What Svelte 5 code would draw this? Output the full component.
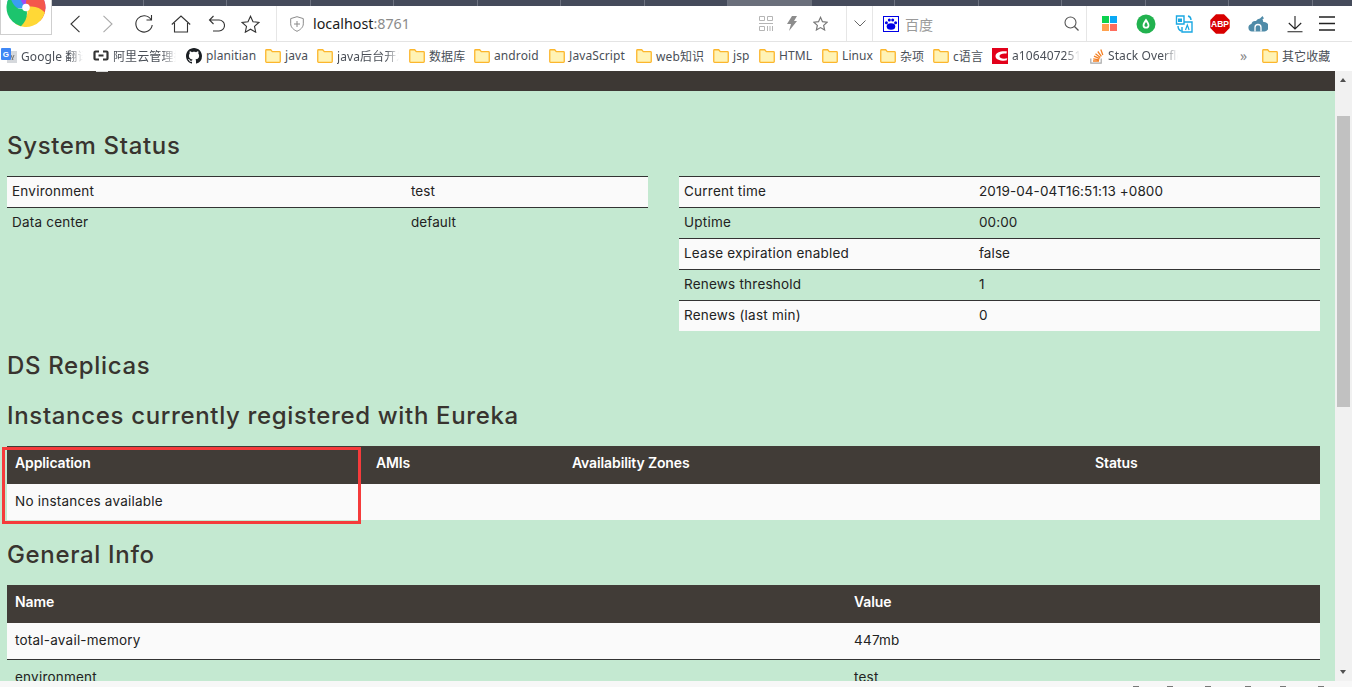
<script>
  const tabs = Array.from({ length: 15 }, (_, i) => i);
  const marks = [1133, 1167, 1205, 1245, 1280, 1318];
  const petals = [
    { color: '#3a9df2', rot: 285 },
    { color: '#a24cf0', rot: 345 },
    { color: '#f4574c', rot: 25 },
    { color: '#ffd836', rot: 105 },
    { color: '#1cc46d', rot: 195 }
  ];
  const bookmarks = [
    { kind: 'google', text: 'Google 翻译', w: 92, fade: true },
    { kind: 'ali', text: '阿里云管理控制台', w: 93, fade: true },
    { kind: 'github', text: 'planitian', w: 79 },
    { kind: 'folder', text: 'java', w: 52 },
    { kind: 'folder', text: 'java后台开发', w: 92, fade: true },
    { kind: 'folder', text: '数据库', w: 65 },
    { kind: 'folder', text: 'android', w: 75 },
    { kind: 'folder', text: 'JavaScript', w: 87 },
    { kind: 'folder', text: 'web知识', w: 77 },
    { kind: 'folder', text: 'jsp', w: 46 },
    { kind: 'folder', text: 'HTML', w: 63 },
    { kind: 'folder', text: 'Linux', w: 58 },
    { kind: 'folder', text: '杂项', w: 53 },
    { kind: 'folder', text: 'c语言', w: 59 },
    { kind: 'csdn', text: 'a1064072510', w: 98, fade: true },
    { kind: 'so', text: 'Stack Overflow', w: 98, fade: true }
  ];
  const leftRows = [['Environment', 'test'], ['Data center', 'default']];
  const rightRows = [
    ['Current time', '2019-04-04T16:51:13 +0800'],
    ['Uptime', '00:00'],
    ['Lease expiration enabled', 'false'],
    ['Renews threshold', '1'],
    ['Renews (last min)', '0']
  ];
</script>

{#snippet folder()}
  <svg class="ico" width="16" height="14" viewBox="0 0 16 14">
    <path d="M.75 12.6V1.5q0-.75.75-.75h4.2l1.6 1.9h7.2q.75 0 .75.75v9.2q0 .75-.75.75H1.5q-.75 0-.75-.75z" fill="#fff3b5" stroke="#fcb62c" stroke-width="1.3"/>
  </svg>
{/snippet}

<div class="window">
  <div class="tabs">
    {#each tabs as t}
      <div class="tab" class:active={t === 8}></div>
    {/each}
  </div>

  <div class="logo">
    <svg width="52" height="30" viewBox="0 0 52 30">
      <g transform="translate(26 7.500)">
        {#each petals as p}
          <path transform="rotate({p.rot})" d="M0 0C-4-6-4-13 0-19.500A19.500 19.500 0 0 1 18.300 6.700C12-4 5-5 0 0z" fill={p.color}/>
        {/each}
        <circle r="3.800" fill="#fff"/>
      </g>
    </svg>
  </div>

  <div class="toolbar">
    <div></div>
    <div class="cell"><svg width="12" height="18" viewBox="0 0 12 18"><path d="M10.500.8 2 9l8.500 8.200" fill="none" stroke="#333" stroke-width="1.100"/></svg></div>
    <div class="cell"><svg width="12" height="18" viewBox="0 0 12 18"><path d="M1.500.8 10 9l-8.500 8.200" fill="none" stroke="#aaa" stroke-width="1.100"/></svg></div>
    <div class="cell"><svg width="20" height="20" viewBox="0 0 20 20"><path d="M17 5.500A8.200 8.200 0 1 0 18.200 11M17.500 1v5h-5" fill="none" stroke="#333" stroke-width="1.100"/></svg></div>
    <div class="cell"><svg width="20" height="18" viewBox="0 0 20 18"><path d="M.8 9.500 10 1l9.200 8.500M3.500 8v9h13V8" fill="none" stroke="#333" stroke-width="1.100"/></svg></div>
    <div class="cell"><svg width="17" height="17" viewBox="0 0 17 17"><path d="M5.500 1 1.500 5l4 4M1.500 5H11a5 5 0 0 1 0 11H5" fill="none" stroke="#333" stroke-width="1.100"/></svg></div>
    <div class="cell"><svg width="19" height="18" viewBox="0 0 19 18"><path d="M9.500 1.200 12 6.700l5.900.7-4.400 4 1.200 5.800-5.200-3-5.200 3 1.200-5.800-4.400-4 5.900-.7z" fill="none" stroke="#333" stroke-width="1.100"/></svg></div>
    <div></div>

    <div class="address">
      <svg width="14" height="16" viewBox="0 0 14 16"><path d="M7 .7 13.300 2.600v5.200c0 3.600-3 6-6.300 7.500C3.700 13.800.7 11.400.7 7.800V2.600zM7 5v6M4 8h6" fill="none" stroke="#8a8a8a" stroke-width="1"/></svg>
      <span class="url">localhost<span class="port">:8761</span></span>
      <span class="spacer"></span>
      <svg class="qr" width="14" height="15" viewBox="0 0 14 15"><path d="M.5.500h5v4h-5zM8.500.500h5v4h-5zM.5 10.500h5v4h-5zM0 7.500h14M8.500 10v5M11 10v5M13.500 10v5" fill="none" stroke="#b5b5b5"/></svg>
      <svg class="bolt" width="10" height="15" viewBox="0 0 10 15"><path d="M5 0h5L7 5h3L2 15l2-7H0z" fill="#8c8c8c"/></svg>
      <svg class="star2" width="15" height="15" viewBox="0 0 19 18"><path d="M9.500 1.200 12 6.700l5.900.7-4.400 4 1.200 5.800-5.200-3-5.200 3 1.200-5.800-4.400-4 5.900-.7z" fill="none" stroke="#777" stroke-width="1.500"/></svg>
    </div>

    <div class="cell sep"><svg width="12" height="7" viewBox="0 0 12 7"><path d="M.5.500 6 6l5.500-5.500" fill="none" stroke="#666"/></svg></div>

    <div class="search">
      <svg width="16" height="16" viewBox="0 0 16 16"><rect width="16" height="16" fill="#fff"/><rect x=".5" y=".5" width="15" height="15" fill="none" stroke="#0000e6"/><ellipse cx="8" cy="10.500" rx="4.300" ry="3.200" fill="#0000e6"/><circle cx="3.400" cy="6.800" r="1.500" fill="#0000e6"/><circle cx="6.300" cy="3.900" r="1.500" fill="#0000e6"/><circle cx="9.700" cy="3.900" r="1.500" fill="#0000e6"/><circle cx="12.600" cy="6.800" r="1.500" fill="#0000e6"/></svg>
      <span class="engine">百度</span>
      <span class="spacer"></span>
      <svg width="15" height="15" viewBox="0 0 15 15"><circle cx="6.500" cy="6.500" r="5.500" fill="none" stroke="#555" stroke-width="1.100"/><path d="m10.500 10.500 4 4" stroke="#555" stroke-width="1.300"/></svg>
    </div>

    <div class="exts">
      <div class="cell"><svg width="15" height="15" viewBox="0 0 15 15"><rect width="7" height="7" fill="#0bd24e"/><rect x="8" width="7" height="7" fill="#0aa9f5"/><rect y="8" width="7" height="7" fill="#ffa24f"/><rect x="8" y="8" width="7" height="7" fill="#ff6d5e"/></svg></div>
      <div class="cell"><svg width="20" height="20" viewBox="0 0 20 20"><circle cx="10" cy="10" r="9.500" fill="#22b24f"/><path d="M10 4.500c2 3 3.400 4.600 3.400 6.700a3.400 3.400 0 0 1-6.800 0c0-2.100 1.400-3.700 3.400-6.700z" fill="#fff"/><path d="M10 8c1 1.500 1.500 2.300 1.500 3.200a1.500 1.500 0 0 1-3 0c0-.9.500-1.700 1.500-3.200z" fill="#22b24f"/></svg></div>
      <div class="cell"><svg width="18" height="18" viewBox="0 0 18 18"><path d="M1.500 1h7.500v8H1.500zM9.500 7h7.500v10H7V12" fill="none" stroke="#1ba8e2" stroke-width="1.400"/><path d="M3 11c0 3 1.500 4.500 3.500 5M13 1c2 .5 3 2 3 4" fill="none" stroke="#1ba8e2" stroke-width="1.400"/><path d="M3 3.500h4v3.500H3z" fill="#1ba8e2"/><path d="m10.500 15 1.800-5 1.800 5" fill="none" stroke="#1ba8e2" stroke-width="1.200"/></svg></div>
      <div class="cell"><svg width="20" height="20" viewBox="0 0 20 20"><path d="M6 .3h8L19.700 6v8L14 19.700H6L.3 14V6z" fill="#d80000"/><text x="10" y="13" text-anchor="middle" class="abp">ABP</text></svg></div>
      <div class="cell"><svg width="20" height="16" viewBox="0 0 20 16"><path d="M4 15.500a3.800 3.800 0 0 1-.6-7.500 4 4 0 0 1 4.600-3A4.500 4.500 0 0 1 12 2.500L14.500 0l1.500 2.500-1.500.5.800 3a4.500 4.500 0 0 1 1.200 9.500z" fill="#4f8ba8"/><path d="M7 15.500v-4a3 3 0 0 1 6 0v4" fill="none" stroke="#fff" stroke-width="1.300"/></svg></div>
      <div class="cell"><svg width="16" height="18" viewBox="0 0 16 18"><path d="M8 1v13M1.800 8 8 14l6.200-6M.5 16.800h15" fill="none" stroke="#222" stroke-width="1.100"/></svg></div>
      <div class="cell"><svg width="16" height="15" viewBox="0 0 16 15"><path d="M0 1h16M0 7.500h16M0 14h16" stroke="#222" stroke-width="1.300"/></svg></div>
    </div>
  </div>

  <div class="bookmarks">
    {#each bookmarks as b}
      <div class="bm" class:fade={b.fade} style:width="{b.w}px">
        {#if b.kind === 'folder'}
          {@render folder()}
        {:else if b.kind === 'google'}
          <svg class="ico" width="16" height="15" viewBox="0 0 16 15"><rect x="6" y="3" width="10" height="12" fill="#d5d8dc"/><path d="M10 7l2 5M13 7l-2 5" stroke="#777"/><rect width="10" height="12" rx="1" fill="#3f87f5"/><text x="5" y="9" text-anchor="middle" class="g">G</text></svg>
        {:else if b.kind === 'ali'}
          <svg class="ico" width="16" height="11" viewBox="0 0 16 11"><path d="M6 1.500H2.500q-1 0-1 1v6q0 1 1 1H6M10 1.500h3.500q1 0 1 1v6q0 1-1 1H10M5.500 5.500h5" fill="none" stroke="#333" stroke-width="2.200"/></svg>
        {:else if b.kind === 'github'}
          <svg class="ico" width="16" height="16" viewBox="0 0 16 16"><path fill="#1b1f23" d="M8 0C3.580 0 0 3.580 0 8c0 3.540 2.290 6.530 5.470 7.590.4.070.55-.17.55-.38 0-.19-.01-.82-.01-1.490-2.010.37-2.530-.49-2.690-.94-.09-.23-.48-.94-.82-1.130-.28-.15-.68-.52-.01-.53.63-.01 1.080.58 1.230.82.72 1.210 1.870.87 2.330.66.070-.52.280-.87.510-1.070-1.780-.2-3.640-.89-3.640-3.950 0-.87.31-1.590.82-2.150-.08-.2-.36-1.020.08-2.120 0 0 .67-.21 2.200.82.64-.18 1.320-.27 2-.27.68 0 1.360.09 2 .27 1.530-1.040 2.200-.82 2.200-.82.44 1.100.16 1.920.08 2.120.51.56.82 1.270.82 2.150 0 3.070-1.870 3.750-3.650 3.950.29.25.54.73.54 1.480 0 1.070-.01 1.930-.01 2.200 0 .21.15.46.55.38A8.013 8.013 0 0016 8c0-4.420-3.580-8-8-8z"/></svg>
        {:else if b.kind === 'csdn'}
          <svg class="ico" width="16" height="16" viewBox="0 0 16 16"><rect width="16" height="16" fill="#e2001a"/><path d="M15 3.500C9 2.800 3.500 4.500 3.500 8.200c0 3.500 5.500 5 11 4.300l.8-2.200c-4 .8-7.800.2-7.800-2.100 0-2.200 3.700-3 6.800-2.500z" fill="#fff"/></svg>
        {:else if b.kind === 'so'}
          <svg class="ico" width="14" height="16" viewBox="0 0 14 16"><path d="M.8 10.500v4.700h10.400v-4.700" fill="none" stroke="#a8a8a8" stroke-width="1.200"/><path d="M3 13h6M3.200 10.800l6 1M4 8.200l5.600 2.500M5.500 5.700l4.800 3.700M7.800 3.500l3.600 4.800M10.800 1.500l2 5.500" fill="none" stroke="#f48024" stroke-width="1.300"/></svg>
        {/if}
        <span class="bm-text">{b.text}</span>
      </div>
    {/each}
    <span class="more">»</span>
    <div class="bm last">
      {@render folder()}
      <span class="bm-text">其它收藏</span>
    </div>
  </div>

  <div class="viewport">
    <div class="page">
      <div class="navbar"><span class="navmark"></span></div>
      <div class="content">
        <h1 class="first">System Status</h1>
        <div class="status">
          <table class="kv left-kv">
            <tbody>
              {#each leftRows as r}
                <tr><td class="k">{r[0]}</td><td>{r[1]}</td></tr>
              {/each}
            </tbody>
          </table>
          <table class="kv right-kv">
            <tbody>
              {#each rightRows as r}
                <tr><td class="k">{r[0]}</td><td>{r[1]}</td></tr>
              {/each}
            </tbody>
          </table>
        </div>

        <h1 class="replicas">DS Replicas</h1>
        <h1 class="instances">Instances currently registered with Eureka</h1>

        <div class="marked">
          <table class="data apps">
            <thead>
              <tr><th class="c1">Application</th><th class="c2">AMIs</th><th class="c3">Availability Zones</th><th>Status</th></tr>
            </thead>
            <tbody>
              <tr><td colspan="4">No instances available</td></tr>
            </tbody>
          </table>
          <div class="redbox"></div>
        </div>

        <h1 class="general">General Info</h1>
        <table class="data info">
          <thead>
            <tr><th class="name">Name</th><th>Value</th></tr>
          </thead>
          <tbody>
            <tr><td>total-avail-memory</td><td>447mb</td></tr>
            <tr><td>environment</td><td>test</td></tr>
          </tbody>
        </table>
      </div>
    </div>
    <div class="scrollbar">
      <span class="arrow up"></span>
      <span class="thumb"></span>
      <span class="arrow down"></span>
    </div>
  </div>

  <div class="status-strip">
    {#each marks as m}
      <span class="mark" style:left="{m}px"></span>
    {/each}
  </div>
</div>

<style>
  :global(body) { margin: 0; background: #fff; }
  .window {
    position: relative;
    width: 1352px;
    height: 687px;
    overflow: hidden;
    display: flex;
    flex-direction: column;
    font-family: "Noto Sans", "Noto Sans CJK SC", sans-serif;
  }
  .tabs {
    height: 6px;
    flex: none;
    display: flex;
    background: #454b5b;
    padding-left: 60px;
    box-sizing: border-box;
  }
  .tab {
    width: 83.500px;
    flex: none;
    box-sizing: border-box;
    border-right: 1px solid #6d7280;
  }
  .tab.active { background: #6a6f7b; border-right: 0; }
  .logo {
    position: absolute;
    left: 0;
    top: 0;
    width: 50px;
    height: 34px;
    background: #fff;
    border: 1px solid #cfcfcf;
    border-top: 0;
    overflow: hidden;
  }
  .logo svg { display: block; margin-left: -1px; }
  .toolbar {
    height: 35px;
    flex: none;
    display: grid;
    grid-template-columns: 57px 36px 30px 42px 32px 38px 30px 11px 570px 26px 214px 1fr;
    align-items: stretch;
    background: #fff;
    border-bottom: 1px solid #e4e4e4;
  }
  .cell { display: flex; align-items: center; justify-content: center; }
  .cell svg { display: block; }
  .address, .search {
    display: flex;
    align-items: center;
    border-left: 1px solid #e6e6e6;
    box-sizing: border-box;
  }
  .address { padding-left: 13px; }
  .url { margin-left: 9px; font-size: 14.300px; color: #1a1a1a; }
  .port { color: #8b8b8b; }
  .spacer { flex: 1; }
  .qr { margin-right: 14px; }
  .bolt { margin-right: 16px; }
  .star2 { margin-right: 18px; }
  .sep { border-left: 1px solid #e6e6e6; }
  .search { padding: 0 7px 0 10px; }
  .engine { margin-left: 6px; font-size: 14px; color: #9a9a9a; }
  .exts {
    display: grid;
    grid-template-columns: 44px 30px 46px 26px 50px 24px 40px 5px;
    border-left: 1px solid #e6e6e6;
  }
  .abp { font: bold 8.500px "Liberation Sans", sans-serif; fill: #fff; }
  .g { font: bold 8px "Liberation Sans", sans-serif; fill: #fff; }
  .bookmarks {
    height: 29px;
    flex: none;
    display: flex;
    align-items: center;
    padding: 0 0 2px 1px;
    background: #fff;
    font-size: 12px;
    color: #4a4f57;
    letter-spacing: .1px;
    box-sizing: border-box;
  }
  .bm {
    display: flex;
    align-items: center;
    gap: 4px;
    flex: none;
    overflow: hidden;
    white-space: nowrap;
    box-sizing: border-box;
    padding-right: 10px;
  }
  .bm.fade .bm-text {
    flex: 1;
    min-width: 0;
    overflow: hidden;
    -webkit-mask-image: linear-gradient(to right, #000 78%, transparent);
    mask-image: linear-gradient(to right, #000 78%, transparent);
  }
  .ico { flex: none; display: block; }
  .more { margin-left: 52px; width: 22px; flex: none; font-size: 14px; color: #888; }
  .bm.last { padding-right: 0; }
  .viewport {
    flex: none;
    height: 610px;
    display: flex;
    overflow: hidden;
  }
  .page {
    flex: 1;
    min-width: 0;
    background: #c4e9d1;
    overflow: hidden;
  }
  .navbar {
    position: relative;
    height: 20px;
    background: #3d3834;
  }
  .navmark {
    position: absolute;
    left: 96px;
    top: 0;
    width: 12px;
    height: 1px;
    background: #d8d8d8;
  }
  .content {
    padding: 0 15px 0 7px;
    font-family: Inter, "Noto Sans", sans-serif;
    font-size: 13.500px;
    letter-spacing: .22px;
    color: #222;
  }
  h1 {
    margin: 0;
    font-size: 24px;
    font-weight: 500;
    line-height: 30px;
    letter-spacing: .66px;
    color: #38342f;
  }
  .first { margin-top: 40px; }
  .status {
    display: flex;
    justify-content: space-between;
    align-items: flex-start;
    margin-top: 15px;
  }
  table { border-collapse: separate; border-spacing: 0; table-layout: fixed; }
  .kv { width: 641px; }
  .kv td {
    height: 28px;
    padding: 0 5px 2px;
    border-top: 1px solid #333;
    box-sizing: content-box;
    white-space: nowrap;
  }
  .kv td:last-child { letter-spacing: .08px; }
  .kv tr:nth-child(odd) td { background: #fafafa; }
  .left-kv .k { width: 389px; }
  .right-kv .k { width: 285px; }
  .replicas { margin-top: 20px; }
  .instances { margin-top: 20px; }
  .marked { position: relative; margin-top: 15px; }
  .data { width: 1313px; }
  .data th {
    height: 32px;
    padding: 0 8px 6px;
    text-align: left;
    background: #413c37;
    color: #fff;
    font-weight: 600;
    font-size: 14px;
    letter-spacing: -.12px;
  }
  .data td { height: 34px; padding: 0 8px 2px; }
  .apps td { background: #fafafa; }
  .c1 { width: 345px; }
  .c2 { width: 180px; }
  .c3 { width: 507px; }
  .redbox {
    position: absolute;
    left: -5px;
    top: 1px;
    width: 353px;
    height: 71px;
    border: 3px solid #f53b3b;
    pointer-events: none;
  }
  .general { margin-top: 20px; }
  .info { margin-top: 15px; }
  .name { width: 823px; }
  .info tbody tr:first-child td {
    background: #fafafa;
    border-bottom: 1px solid #333;
  }
  .scrollbar {
    position: relative;
    flex: none;
    width: 17px;
    background: #f1f1f1;
  }
  .thumb {
    position: absolute;
    left: 2px;
    top: 45px;
    width: 13px;
    height: 291px;
    background: #c1c1c1;
  }
  .arrow {
    position: absolute;
    left: 5px;
    width: 0;
    height: 0;
    border-left: 3.500px solid transparent;
    border-right: 3.500px solid transparent;
  }
  .up { top: 7px; border-bottom: 4px solid #505050; }
  .down { bottom: 7px; border-top: 4px solid #505050; }
  .status-strip {
    position: relative;
    flex: 1;
    background: #f7f7f7;
  }
  .mark {
    position: absolute;
    top: 5px;
    width: 6px;
    height: 2px;
    background: #777;
  }
</style>
